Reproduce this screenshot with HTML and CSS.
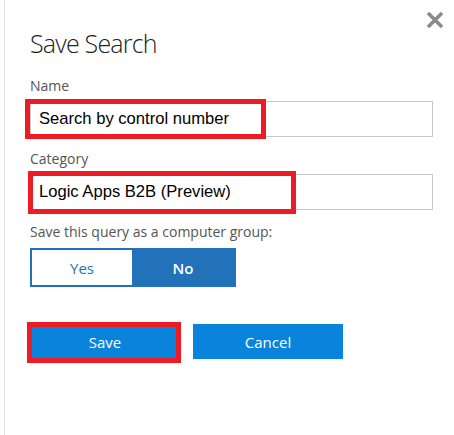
FILE: index.html
```html
<!DOCTYPE html>
<html>
<head>
<meta charset="utf-8">
<link rel="stylesheet" href="styles.css">
</head>
<body>
<div class="panel">
  <button class="close" aria-label="Close">
    <svg width="18" height="18" viewBox="0 0 18 18"><path d="M2 2 L16 16 M16 2 L2 16" stroke="#8a8a8a" stroke-width="3.6" stroke-linecap="butt"/></svg>
  </button>
  <h1 class="title">Save Search</h1>

  <label class="label label-first">Name</label>
  <div class="field">
    <div class="input">Search by control number</div>
    <span class="mark mark-name"></span>
  </div>

  <label class="label">Category</label>
  <div class="field">
    <div class="input">Logic Apps B2B (Preview)</div>
    <span class="mark mark-cat"></span>
  </div>

  <label class="label">Save this query as a computer group:</label>
  <div class="toggle">
    <span class="opt opt-yes">Yes</span>
    <span class="opt opt-no">No</span>
  </div>

  <div class="actions">
    <div class="field">
      <button class="btn">Save</button>
      <span class="mark mark-save"></span>
    </div>
    <button class="btn">Cancel</button>
  </div>
</div>
</body>
</html>
```
FILE: styles.css
```css
html, body {
  margin: 0;
  padding: 0;
  background: #fff;
}
.panel {
  position: relative;
  margin-left: 4px;
  border-left: 1px solid #e1e1e1;
  min-height: 435px;
  box-sizing: border-box;
  padding: 27px 21px 0 25px;
  font-family: "Open Sans", "Noto Sans", sans-serif;
  color: #333;
}
.close {
  position: absolute;
  top: 11px;
  right: 10px;
  padding: 0;
  border: 0;
  background: none;
  width: 18px;
  height: 18px;
  display: block;
}
.close svg { display: block; }
.title {
  margin: 0;
  font-size: 25px;
  line-height: 32px;
  font-weight: 300;
  color: #222;
  letter-spacing: -0.8px;
}
.label {
  display: block;
  font-size: 14px;
  line-height: 20px;
  color: #555;
  margin: 12px 0 5px;
}
.label-first { margin-top: 17px; }
.field {
  position: relative;
}
.input {
  height: 36px;
  box-sizing: border-box;
  border: 1px solid #c8c8c8;
  padding: 0 8px;
  display: flex;
  align-items: center;
  font-family: "Liberation Sans", Arial, sans-serif;
  font-size: 16.6px;
  color: #000;
}
.mark {
  position: absolute;
  border: 5px solid #ed1c24;
  box-sizing: border-box;
  pointer-events: none;
}
.mark-name { left: -5px; top: -2px; width: 241px; height: 40px; }
.mark-cat { left: -2px; top: -3px; width: 268px; height: 43px; }
.mark-save { left: -3px; top: -2px; width: 154px; height: 41px; }
.toggle {
  margin-top: 6px;
  display: flex;
  width: 206px;
  height: 39px;
  box-sizing: border-box;
  border: 2px solid #2272ba;
}
.opt {
  display: flex;
  align-items: center;
  justify-content: center;
  font-size: 15px;
}
.opt-yes {
  width: 100px;
  color: #2272ba;
  background: #fff;
}
.opt-no {
  flex: 1;
  color: #fff;
  background: #2272ba;
  font-weight: 600;
}
.actions {
  margin-top: 37px;
  display: flex;
  gap: 13px;
}
.btn {
  display: block;
  width: 150px;
  height: 35px;
  border: 0;
  padding: 0;
  background: #0a83dc;
  color: #fff;
  font-family: "Open Sans", "Noto Sans", sans-serif;
  font-size: 15px;
}
```
